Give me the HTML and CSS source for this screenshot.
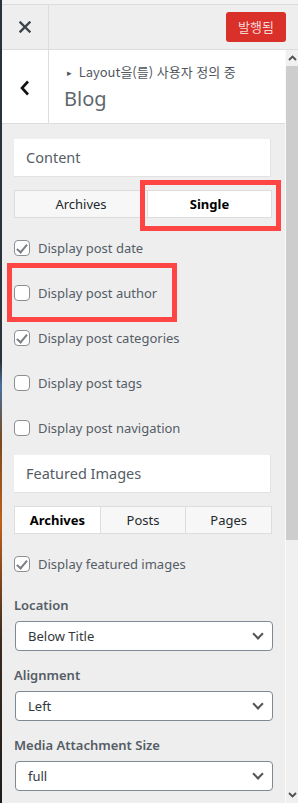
FILE: index.html
```html
<!DOCTYPE html>
<html lang="ko">
<head>
  <meta charset="UTF-8">
  <title>Customize Blog</title>
  <link rel="stylesheet" href="styles.css">
</head>
<body>

<div class="edge"></div>

<div class="panel">
  <!-- Top bar -->
  <div class="topbar">
    <div class="close-btn">
      <svg width="12" height="12" viewBox="0 0 12 12"><path d="M1.5 1.5 L10.5 10.5 M10.5 1.5 L1.5 10.5" stroke="#3c434a" stroke-width="2.4" stroke-linecap="square"/></svg>
    </div>
    <div class="topbar-right">
      <button class="publish-btn">발행됨</button>
    </div>
  </div>

  <div class="body-row">
    <div class="main">
      <!-- Section heading -->
      <div class="section-head">
        <div class="back-btn">
          <svg width="10" height="16" viewBox="0 0 10 16"><path d="M8 1.5 L2 8 L8 14.5" fill="none" stroke="#111" stroke-width="2.6"/></svg>
        </div>
        <div class="section-title">
          <div class="crumb"><span class="tri">&#9656;</span> Layout을(를) 사용자 정의 중</div>
          <div class="title">Blog</div>
        </div>
      </div>

      <div class="controls">
        <div class="group-title">Content</div>

        <div class="tabs tabs-two">
          <div class="tab">Archives</div>
          <div class="tab active">Single</div>
        </div>

        <div class="checks">
          <label class="check"><span class="box checked"></span>Display post date</label>
          <label class="check"><span class="box"></span>Display post author</label>
          <label class="check"><span class="box checked"></span>Display post categories</label>
          <label class="check"><span class="box"></span>Display post tags</label>
          <label class="check"><span class="box"></span>Display post navigation</label>
        </div>

        <div class="group-title group-second">Featured Images</div>

        <div class="tabs tabs-three">
          <div class="tab active">Archives</div>
          <div class="tab">Posts</div>
          <div class="tab">Pages</div>
        </div>

        <div class="checks checks-single">
          <label class="check"><span class="box checked"></span>Display featured images</label>
        </div>

        <div class="field field-first">
          <div class="field-label">Location</div>
          <div class="select">Below Title<span class="chev"></span></div>
        </div>
        <div class="field">
          <div class="field-label">Alignment</div>
          <div class="select">Left<span class="chev"></span></div>
        </div>
        <div class="field">
          <div class="field-label">Media Attachment Size</div>
          <div class="select">full<span class="chev"></span></div>
        </div>
      </div>
    </div>

    <!-- Scrollbar -->
    <div class="scrollbar">
      <div class="sb-arrow">
        <svg width="9" height="6" viewBox="0 0 9 6"><path d="M1 5 L4.5 1.5 L8 5" fill="none" stroke="#505050" stroke-width="1.8"/></svg>
      </div>
      <div class="sb-thumb"></div>
      <div class="sb-track"></div>
      <div class="sb-arrow">
        <svg width="9" height="6" viewBox="0 0 9 6"><path d="M1 1 L4.5 4.5 L8 1" fill="none" stroke="#505050" stroke-width="1.8"/></svg>
      </div>
    </div>
  </div>
</div>

<!-- Annotation boxes -->
<div class="mark mark-single"></div>
<div class="mark mark-author"></div>

</body>
</html>
```

FILE: styles.css
```css
* { box-sizing: border-box; }

html, body {
  margin: 0;
  width: 298px;
  height: 803px;
  overflow: hidden;
}

body {
  position: relative;
  display: flex;
  background: #eee;
  font-family: "Noto Sans", "Noto Sans CJK KR", sans-serif;
  color: #555d66;
}

.edge {
  width: 2px;
  flex-shrink: 0;
  background: linear-gradient(#2c3338 0%, #2c3338 45%, #4a6fa0 48%, #7a4a1c 55%, #c0601a 65%, #3a2a20 80%, #1d1d1d 100%);
}

.panel {
  flex: 1;
  display: flex;
  flex-direction: column;
  min-width: 0;
}

/* Top bar */
.topbar {
  height: 50px;
  display: flex;
  background: #eee;
  border-top: 4px solid #f3f3f3;
  border-bottom: 1px solid #ddd;
  box-shadow: inset 0 1px 0 #dcdcdc;
}

.close-btn {
  width: 47px;
  display: flex;
  align-items: center;
  justify-content: center;
  border-right: 1px solid #ddd;
}

.topbar-right {
  flex: 1;
  display: flex;
  justify-content: flex-end;
  align-items: center;
  padding-right: 12px;
}

.publish-btn {
  width: 60px;
  height: 30px;
  border: none;
  border-radius: 3px;
  background: #d9302a;
  color: #f6d6d4;
  font-family: "Noto Sans CJK KR", sans-serif;
  font-size: 13px;
  padding: 0;
}

.body-row {
  flex: 1;
  display: flex;
  min-height: 0;
}

.main {
  flex: 1;
  min-width: 0;
}

/* Section heading */
.section-head {
  height: 74px;
  display: flex;
  background: #fff;
  border-bottom: 1px solid #ddd;
}

.back-btn {
  width: 47px;
  display: flex;
  align-items: center;
  justify-content: center;
  border-right: 1px solid #ddd;
  padding-top: 2px;
}

.section-title {
  padding: 12px 0 0 15px;
}

.crumb {
  font-family: "Noto Sans CJK KR", sans-serif;
  font-size: 13px;
  line-height: 20px;
  color: #50575e;
}

.tri {
  font-size: 9px;
  margin-left: 3px;
  margin-right: 3px;
  vertical-align: 1px;
}

.title {
  font-size: 20px;
  line-height: 26px;
  margin-top: 3px;
  color: #5f666d;
}

/* Controls */
.controls {
  padding: 15px 12px 0 12px;
}

.group-title {
  width: 257px;
  height: 38px;
  background: #fff;
  border-bottom: 1px solid #e2e2e2;
  border-right: 1px solid #e2e2e2;
  padding-left: 12px;
  font-size: 14.5px;
  line-height: 37px;
  color: #555d66;
}

.group-second {
  margin-top: 19px;
}

.tabs {
  display: flex;
  width: 258px;
  height: 28px;
  margin-top: 13px;
  border: 1px solid #ddd;
  background: #f7f7f7;
}

.tab {
  flex: 1;
  text-align: center;
  font-size: 13px;
  line-height: 26px;
  color: #23282d;
  border-left: 1px solid #ddd;
}

.tab:first-child { border-left: none; }

.tab.active {
  background: #fff;
  font-weight: bold;
  color: #000;
}

.tabs-two .tab:first-child { flex: 0 0 132px; }

.checks {
  display: flex;
  flex-direction: column;
  gap: 29px;
  margin-top: 22px;
}

.checks-single { margin-top: 22px; }

.check {
  display: flex;
  align-items: center;
  height: 16px;
  font-size: 13px;
  color: #555d66;
}

.box {
  width: 16px;
  height: 16px;
  border: 1px solid #8c8f94;
  border-radius: 4px;
  background: #fff;
  margin-right: 8px;
  position: relative;
  flex-shrink: 0;
}

.box.checked::after {
  content: "";
  position: absolute;
  left: 4px;
  top: 1px;
  width: 4px;
  height: 9px;
  border: solid #7c8087;
  border-width: 0 2px 2px 0;
  transform: rotate(40deg);
}

/* Select fields */
.field { margin-top: 15px; }
.field-first { margin-top: 24px; }

.field-label {
  font-size: 13px;
  line-height: 18px;
  font-weight: 600;
  color: #555d66;
  margin-bottom: 7px;
}

.select {
  position: relative;
  width: 258px;
  height: 30px;
  margin-left: 1px;
  background: #fff;
  border: 1px solid #7e8993;
  border-radius: 4px;
  padding-left: 12px;
  font-size: 13px;
  line-height: 28px;
  color: #32373c;
}

.chev {
  position: absolute;
  right: 10px;
  top: 8px;
  width: 8px;
  height: 8px;
  border: solid #555;
  border-width: 0 2px 2px 0;
  transform: rotate(45deg);
}

/* Scrollbar */
.scrollbar {
  width: 13px;
  display: flex;
  flex-direction: column;
  background: #f0f0f0;
  border-left: 1px solid #fafafa;
}

.sb-arrow {
  height: 16px;
  display: flex;
  align-items: center;
  justify-content: center;
}

.sb-thumb {
  height: 474px;
  background: #cdcdcd;
}

.sb-track { flex: 1; }

/* Annotations */
.mark {
  position: absolute;
  border: 5px solid #ff4444;
}

.mark-single {
  left: 140px;
  top: 180px;
  width: 141px;
  height: 51px;
}

.mark-author {
  left: 7px;
  top: 263px;
  width: 170px;
  height: 59px;
}
```
